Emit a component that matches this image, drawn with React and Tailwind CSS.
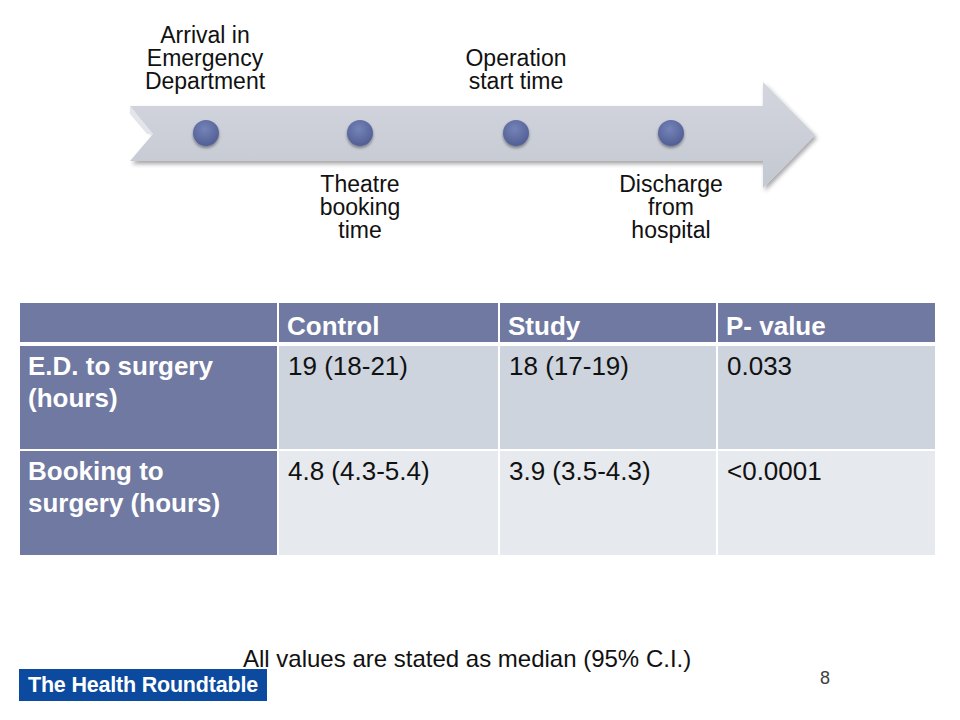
import React from 'react';

const labels = [
  { x: 205, top: 24, lines: ['Arrival in', 'Emergency', 'Department'] },
  { x: 360, top: 173, lines: ['Theatre', 'booking', 'time'] },
  { x: 516, top: 47, lines: ['Operation', 'start time'] },
  { x: 671, top: 173, lines: ['Discharge', 'from', 'hospital'] },
];

const dots = [206, 360, 516, 671];

const rows = [
  { label: ['E.D. to surgery', '(hours)'], values: ['19 (18-21)', '18 (17-19)', '0.033'], bg: 'bg-[#cdd4de]', h: 'h-[103px]', mt: 'mt-[4px]' },
  { label: ['Booking to', 'surgery (hours)'], values: ['4.8 (4.3-5.4)', '3.9 (3.5-4.3)', '<0.0001'], bg: 'bg-[#e6e9ee]', h: 'h-[104px]', mt: 'mt-[2px]' },
];

const Timeline = () => (
  <div className="relative h-[260px]">
    <svg width="960" height="260" className="block">
      <defs>
        <linearGradient id="band" x1="0" y1="0" x2="0" y2="1">
          <stop offset="0" stopColor="#d3d6de" />
          <stop offset="1" stopColor="#c4c8d1" />
        </linearGradient>
        <radialGradient id="dot" cx="0.45" cy="0.35" r="0.7">
          <stop offset="0" stopColor="#7483b8" />
          <stop offset="1" stopColor="#4f5c92" />
        </radialGradient>
        <filter id="shadow" x="-10%" y="-30%" width="120%" height="160%">
          <feDropShadow dx="2" dy="3" stdDeviation="2" floodColor="#000" floodOpacity="0.35" />
        </filter>
        <filter id="dshadow" x="-50%" y="-50%" width="200%" height="200%">
          <feDropShadow dx="0" dy="2" stdDeviation="1.5" floodColor="#000" floodOpacity="0.4" />
        </filter>
      </defs>
      <path
        d="M130 106 L763 106 L763 82 L815 135 L763 188 L763 161 L130 161 L153 134 Z"
        fill="url(#band)"
        filter="url(#shadow)"
      />
      <path d="M130 106 L153 134 L147 134 L130 114 Z" fill="#e3e5ea" />
      {dots.map((cx) => (
        <circle key={cx} cx={cx} cy="133" r="13" fill="url(#dot)" filter="url(#dshadow)" />
      ))}
    </svg>
    {labels.map((l) => (
      <div
        key={l.x}
        className="absolute w-[200px] text-center text-[23px] leading-[23px] text-[#111]"
        style={{ left: l.x - 100, top: l.top }}
      >
        {l.lines.map((t) => (
          <div key={t}>{t}</div>
        ))}
      </div>
    ))}
  </div>
);

const cols = 'grid grid-cols-[257px_219px_216px_217px] gap-x-[2px]';

const App = () => (
  <div className="w-[960px] h-[720px] bg-white overflow-hidden font-['Liberation_Sans',Arial,sans-serif]">
    <Timeline />

    <div className="ml-[20px] mt-[43px] w-[915px]">
      <div className={`${cols} h-[39px]`}>
        <div className="bg-[#6f79a1]" />
        {['Control', 'Study', 'P- value'].map((h) => (
          <div key={h} className="bg-[#6f79a1] pl-[8px] pt-[7px] text-[26px] leading-[32px] font-bold text-white">
            {h}
          </div>
        ))}
      </div>
      {rows.map((r) => (
        <div key={r.label[0]} className={`${cols} ${r.h} ${r.mt}`}>
          <div className="bg-[#6f79a1] pl-[8px] pt-[4px] text-[26px] leading-[32px] font-bold text-white">
            {r.label[0]}
            <br />
            {r.label[1]}
          </div>
          {r.values.map((v) => (
            <div key={v} className={`${r.bg} pl-[9px] pt-[4px] text-[26px] leading-[32px] text-[#111]`}>
              {v}
            </div>
          ))}
        </div>
      ))}
    </div>

    <div className="mt-[90px] pl-[243px] h-[24px] text-[24px] leading-[28px] text-[#111]">
      All values are stated as median (95% C.I.)
    </div>
    <div className="flex items-start">
      <div className="ml-[19px] w-[248px] h-[32px] bg-[#0b4a9e] text-white font-bold text-[21.5px] leading-[32px] pl-[9px] tracking-[-0.2px]">
        The Health Roundtable
      </div>
      <div className="ml-[553px] -mt-[3px] text-[18px] leading-[24px] text-[#404040]">8</div>
    </div>
  </div>
);

export default App;
